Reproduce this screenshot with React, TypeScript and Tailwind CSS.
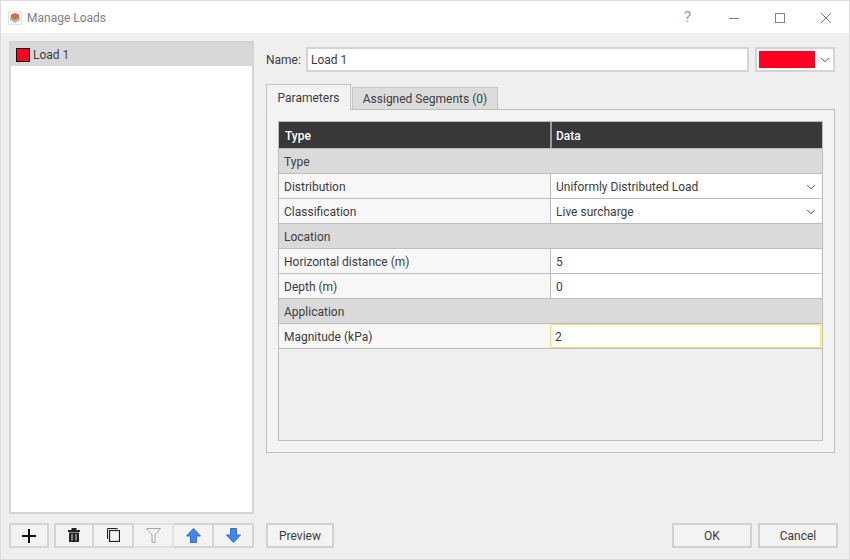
import { ChevronDown } from "lucide-react";

const font = "font-['Roboto','Noto_Sans',sans-serif]";

function SectionRow({ label }: { label: string }) {
  return (
    <div className="flex h-[25px] items-center border-b border-[#bdbdbd] bg-[#dadada] pl-[5px] pt-[1px] text-[#3c3c3c]">
      {label}
    </div>
  );
}

function DataRow({
  label,
  value,
  select,
  focused,
}: {
  label: string;
  value: string;
  select?: boolean;
  focused?: boolean;
}) {
  return (
    <div className="flex h-[25px] border-b border-[#bdbdbd] bg-[#f7f7f7] text-[#3c3c3c]">
      <div className="flex w-[271px] items-center pl-[5px] pt-[1px]">{label}</div>
      <div
        className={
          focused
            ? "mr-[1px] flex flex-1 items-center border border-[#f7dc7c] bg-white pl-[4px] pt-[1px]"
            : "mr-[1px] flex flex-1 items-center border-l border-[#bdbdbd] bg-white pl-[5px] pt-[1px]"
        }
      >
        <span className="flex-1">{value}</span>
        {select && <ChevronDown size={14} strokeWidth={1.6} className="mr-[3px] text-[#444]" />}
      </div>
    </div>
  );
}

function ToolButton({ children, className }: { children: React.ReactNode; className?: string }) {
  return (
    <div className={"flex h-[25px] w-[40px] items-center justify-center border-2 border-[#d4d4d4] bg-[#f3f3f3] " + (className ?? "")}>
      {children}
    </div>
  );
}

function PushButton({ label, w }: { label: string; w: string }) {
  return (
    <div className={"flex h-[25px] items-center justify-center border-2 border-[#d0d0d0] bg-[#f3f3f3] text-[#3c3c3c] " + w}>
      {label}
    </div>
  );
}

export default function App() {
  return (
    <div className={"flex h-[560px] w-[850px] flex-col border border-[#dcdcdc] bg-[#efefef] text-[12px] " + font}>
      {/* title bar */}
      <div className="flex h-[32px] items-center bg-white pl-[7px] pt-[1px]">
        <svg width="14" height="14" viewBox="0 0 14 14">
          <rect x="0.5" y="0.5" width="13" height="13" fill="#fafafa" stroke="#e4e4e4" />
          <path d="M2 6 L7 8.5 L12 6 L12 9 L7 12 L2 9Z" fill="#b9b9b9" />
          <path d="M3 3.5 L7 2 L11 3.5 L11 7 L7 9 L3 7Z" fill="#c9724e" />
        </svg>
        <span className="ml-[5px] flex-1 text-[#7f7f7f]">Manage Loads</span>
        <span className="mr-[38px] text-[15px] text-[#9a9a9a]">?</span>
        <svg width="10" height="10" viewBox="0 0 10 10" className="mr-[36px]">
          <path d="M0 5.5 H10" stroke="#808080" />
        </svg>
        <svg width="10" height="10" viewBox="0 0 10 10" className="mr-[36px]">
          <rect x="0.5" y="0.5" width="9" height="9" fill="none" stroke="#808080" />
        </svg>
        <svg width="10" height="10" viewBox="0 0 10 10" className="mr-[18px]">
          <path d="M0 0 L10 10 M10 0 L0 10" stroke="#808080" />
        </svg>
      </div>

      <div className="flex flex-1 pl-[8px] pt-[8px]">
        {/* left column */}
        <div className="flex w-[245px] flex-col">
          <div className="h-[473px] border-2 border-[#d4d4d4] bg-white">
            <div className="flex h-[23px] items-center bg-[#d8d8d8] pl-[5px] text-[#3c3c3c]">
              <div className="mr-[3px] h-[14px] w-[14px] border border-black bg-[#ff0022]" />
              Load 1
            </div>
          </div>
          <div className="mt-[9px] flex">
            <ToolButton className="mr-[5px]">
              <svg width="14" height="14" viewBox="0 0 14 14">
                <path d="M7 0 V14 M0 7 H14" stroke="#111" strokeWidth="2" />
              </svg>
            </ToolButton>
            <ToolButton>
              <svg width="12" height="14" viewBox="0 0 12 14" className="-mt-[1px]">
                <path d="M0 2 H12 V4 H0Z M3.5 0 H8.5 V2 H3.5Z" fill="#222" />
                <path d="M1 4.5 H11 V14 H1Z" fill="#222" />
                <path d="M4 6 V12.5 M8 6 V12.5" stroke="#ddd" strokeWidth="1" />
              </svg>
            </ToolButton>
            <ToolButton className="border-l-0">
              <svg width="13" height="14" viewBox="0 0 13 14" fill="none" stroke="#222" className="-mt-[1px]">
                <path d="M10.5 0.5 H0.5 V11" />
                <rect x="2.5" y="2.5" width="10" height="11" strokeWidth="1.2" />
              </svg>
            </ToolButton>
            <ToolButton className="border-l-0 border-[#e2e2e2] bg-[#f0f0f0]">
              <svg width="15" height="15" viewBox="0 0 15 15" fill="none" stroke="#a8a8a8" className="-mt-[1px]">
                <path d="M0.5 0.5 H14.5 L9 7 V14.5 H6 V7Z" />
              </svg>
            </ToolButton>
            <ToolButton className="border-l-0">
              <svg width="15" height="15" viewBox="0 0 15 15" className="-mt-[1px]">
                <path d="M7.5 0.5 L14.5 8 H10.5 V14.5 H4.5 V8 H0.5Z" fill="#3f86f0" stroke="#3a6fbf" />
              </svg>
            </ToolButton>
            <ToolButton className="border-l-0">
              <svg width="15" height="15" viewBox="0 0 15 15" className="-mt-[1px]">
                <path d="M7.5 14.5 L14.5 7 H10.5 V0.5 H4.5 V7 H0.5Z" fill="#3f86f0" stroke="#3a6fbf" />
              </svg>
            </ToolButton>
          </div>
        </div>

        {/* right column */}
        <div className="ml-[12px] flex w-[572px] flex-col">
          <div className="mt-[6px] flex h-[25px] items-center text-[#3c3c3c]">
            <span className="w-[40px]">Name:</span>
            <div className="flex h-[25px] w-[443px] items-center border-2 border-[#d4d4d4] bg-white pl-[3px]">Load 1</div>
            <div className="ml-[6px] flex h-[25px] w-[80px] items-center border-2 border-[#d4d4d4] bg-white pl-[2px]">
              <div className="h-[17px] w-[56px] bg-[#ff0022]" />
              <ChevronDown size={14} strokeWidth={1.6} className="ml-[3px] text-[#444]" />
            </div>
          </div>

          <div className="mt-[12px] flex h-[26px] items-end text-[#3c3c3c]">
            <div className="relative z-10 flex h-[26px] w-[85px] items-center justify-center border border-b-0 border-[#c4c4c4] bg-[#f3f3f3]">
              Parameters
            </div>
            <div className="ml-[1px] flex h-[23px] w-[146px] items-center justify-center border border-b-0 border-[#c4c4c4] bg-[#dcdcdc]">
              Assigned Segments (0)
            </div>
          </div>

          <div className="-mt-px h-[344px] w-[569px] border border-[#bdbdbd] bg-[#f3f3f3] px-[11px] pt-[11px]">
            <div className="h-[320px] w-[545px] border border-[#bdbdbd] bg-[#efefef]">
              <div className="flex h-[27px] border-b border-[#bdbdbd] bg-[#383838] font-medium text-white">
                <div className="flex w-[271px] items-center pl-[6px] pt-[1px]">Type</div>
                <div className="flex flex-1 items-center border-l-2 border-[#9a9a9a] pl-[4px] pt-[1px]">Data</div>
              </div>
              <SectionRow label="Type" />
              <DataRow label="Distribution" value="Uniformly Distributed Load" select />
              <DataRow label="Classification" value="Live surcharge" select />
              <SectionRow label="Location" />
              <DataRow label="Horizontal distance (m)" value="5" />
              <DataRow label="Depth (m)" value="0" />
              <SectionRow label="Application" />
              <DataRow label="Magnitude (kPa)" value="2" focused />
            </div>
          </div>

          <div className="mt-[70px] flex">
            <PushButton label="Preview" w="w-[68px]" />
            <div className="flex-1" />
            <PushButton label="OK" w="w-[80px]" />
            <div className="w-[6px]" />
            <PushButton label="Cancel" w="w-[80px]" />
          </div>
        </div>
      </div>
    </div>
  );
}
